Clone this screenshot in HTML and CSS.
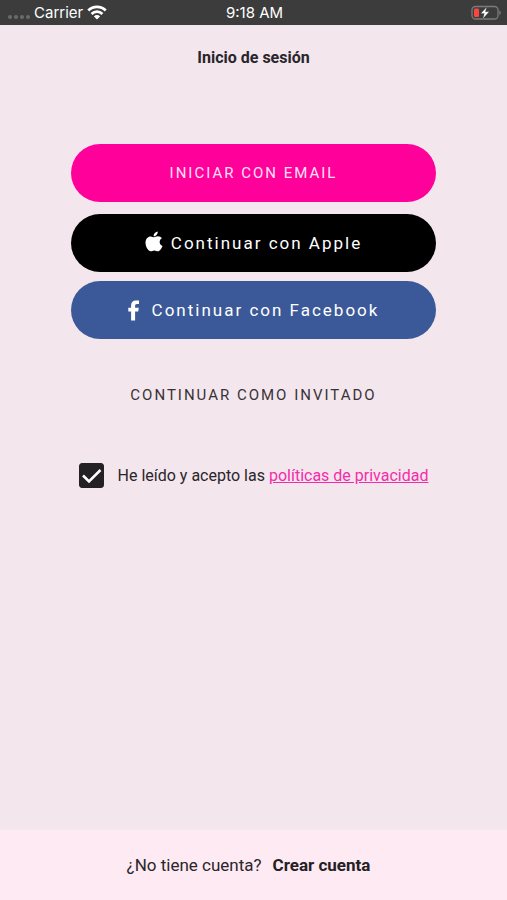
FILE: index.html
```html
<!DOCTYPE html>
<html lang="es">
<head>
<meta charset="utf-8">
<meta name="viewport" content="width=device-width, initial-scale=1">
<title>Inicio de sesión</title>
<link rel="stylesheet" href="styles.css">
</head>
<body>
<div class="status-bar">
  <div class="status-left">
    <span class="signal" aria-hidden="true"><i></i><i></i><i></i><i></i></span>
    <span>Carrier</span>
    <svg class="wifi" viewBox="0 0 20 15" aria-hidden="true">
      <g fill="none" stroke="currentColor" stroke-width="2.800">
        <path d="M1.300 5.400a12.300 12.300 0 0 1 17.400 0"/>
        <path d="M4.600 8.900a7.600 7.600 0 0 1 10.800 0"/>
      </g>
      <path d="M6.900 11.400a4.400 4.400 0 0 1 6.200 0L10 14.600z" fill="currentColor"/>
    </svg>
  </div>
  <span class="time">9:18 AM</span>
  <div class="status-right">
    <svg class="battery" viewBox="0 0 30 16" aria-hidden="true">
      <rect x="1" y="1.500" width="26" height="12.500" rx="3.500" fill="none" stroke="#7b7b7b" stroke-width="1.300"/>
      <path d="M28.300 5.500q1.500.6 1.500 2.250t-1.500 2.250z" fill="#7b7b7b"/>
      <rect x="3" y="3.500" width="5" height="8.500" rx="1.200" fill="#fb4540"/>
      <path d="M15.800 2 9.800 8.600h3.500l-1.500 5.200 6.400-7h-3.800z" fill="#fff" stroke="#3c3c3c" stroke-width=".3"/>
    </svg>
  </div>
</div>
<header class="title-bar"><h1>Inicio de sesión</h1></header>
<main class="content">
  <button class="button email" type="button">INICIAR CON EMAIL</button>
  <button class="button apple" type="button">
    <svg class="apple-icon" viewBox="0 0 18 21" aria-hidden="true">
      <path fill="currentColor" d="M12.700.4c.2 1.400-.4 2.700-1.200 3.600-.8.900-1.800 1.400-2.900 1.300-.1-1.300.4-2.500 1.200-3.400.8-.9 1.900-1.400 2.900-1.500zM9 6.200c.8 0 2.100-1 3.900-1 1.700 0 3.200.8 4 2-3.300 2-2.800 6.400.6 7.700-.8 2.400-2.700 5.300-4.600 5.300-1.400 0-1.900-.8-3.600-.8s-2.300.8-3.600.8C3.300 20.200.5 15.700.5 11.700c0-4 2.500-6.300 5.100-6.300 1.500 0 2.700.8 3.400.8z"/>
    </svg>
    <span>Continuar con Apple</span>
  </button>
  <button class="button facebook" type="button">
    <svg class="facebook-icon" viewBox="0 0 12 21" aria-hidden="true">
      <path fill="currentColor" d="M3.100 20.500v-9H.3V7.700h2.800V5.200C3.100 2 5 .4 7.800.4c1.300 0 2.400.1 3.200.2v3.300H9c-1.500 0-1.900.7-1.900 1.800v2h3.700l-.6 3.800H7.100v9z"/>
    </svg>
    <span>Continuar con Facebook</span>
  </button>
  <button class="guest" type="button">CONTINUAR COMO INVITADO</button>
  <div class="consent">
    <input class="checkbox" type="checkbox" id="privacy" checked>
    <svg class="check" viewBox="0 0 25 25" aria-hidden="true"><path d="m4 12.500 6 6L21.500 7" fill="none" stroke="#fff" stroke-width="2.500"/></svg>
    <label for="privacy">He leído y acepto las <a href="#privacidad">políticas de privacidad</a></label>
  </div>
</main>
<footer class="footer">
  <span>¿No tiene cuenta?</span>
  <a href="#crear">Crear cuenta</a>
</footer>
</body>
</html>
```
FILE: styles.css
```css
* {
  box-sizing: border-box;
}

body {
  margin: 0;
  min-height: 100vh;
  display: flex;
  flex-direction: column;
  background: #f3e6ed;
  color: #29252a;
  font-family: Roboto, "Liberation Sans", sans-serif;
  font-size: 16px;
}

.status-bar {
  display: grid;
  grid-template-columns: 1fr auto 1fr;
  align-items: center;
  height: 25px;
  padding: 0 6px 0 8px;
  background: #3c3c3c;
  color: #fff;
  font-family: "Liberation Sans", sans-serif;
  font-family: Inter, "Liberation Sans", sans-serif;
  font-size: 15px;
}

.status-left {
  display: flex;
  align-items: center;
  gap: 4px;
}

.signal {
  display: flex;
  gap: 2px;
  padding-top: 8px;
}

.signal i {
  width: 4px;
  height: 4px;
  border-radius: 2px;
  background: #6b6b6b;
}

.wifi {
  width: 20px;
  height: 15px;
}

.status-right {
  display: flex;
  justify-content: flex-end;
}

.battery {
  width: 30px;
  height: 16px;
}

.title-bar {
  padding: 23px 16px;
  text-align: center;
}

h1 {
  margin: 0;
  font-size: 16px;
  line-height: 20px;
  font-weight: 700;
}

.content {
  flex: 1;
  display: flex;
  flex-direction: column;
  align-items: center;
  padding-top: 53px;
}

button {
  border: 0;
  font: inherit;
  cursor: pointer;
}

.button {
  display: flex;
  align-items: center;
  justify-content: center;
  width: 72%;
  height: 58px;
  padding: 0;
  border-radius: 29px;
  color: #fff;
  font-size: 17px;
  letter-spacing: 2px;
}

.email {
  margin-bottom: 12px;
  background: #ff009b;
  color: #ffe0f3;
  font-size: 15px;
}

.apple {
  gap: 8px;
  margin-bottom: 9px;
  background: #000;
}

.facebook {
  gap: 12px;
  background: #3b5998;
}

.apple-icon {
  width: 18px;
  height: 21px;
  margin-bottom: 4px;
}

.facebook-icon {
  width: 12px;
  height: 21px;
}

.guest {
  margin-top: 36px;
  padding: 10px;
  background: transparent;
  color: #383238;
  font-size: 15px;
  line-height: 20px;
  letter-spacing: 2px;
}

.consent {
  position: relative;
  display: flex;
  align-items: center;
  gap: 14px;
  margin-top: 48px;
}

.checkbox {
  appearance: none;
  width: 25px;
  height: 25px;
  margin: 0;
  border: 1px solid #242124;
  border-radius: 3px;
}

.checkbox:checked {
  background: #242124;
}

.check {
  position: absolute;
  left: 0;
  top: 0;
  width: 25px;
  height: 25px;
  pointer-events: none;
}

.checkbox:not(:checked) + .check {
  display: none;
}

.consent a {
  color: #f32daa;
}

.footer {
  display: flex;
  align-items: center;
  justify-content: center;
  gap: 11px;
  height: 70px;
  padding: 0 18px 0 8px;
  background: #fdeaf3;
  font-size: 17px;
}

.footer a {
  color: #242024;
  font-weight: 700;
  text-decoration: none;
}
```
